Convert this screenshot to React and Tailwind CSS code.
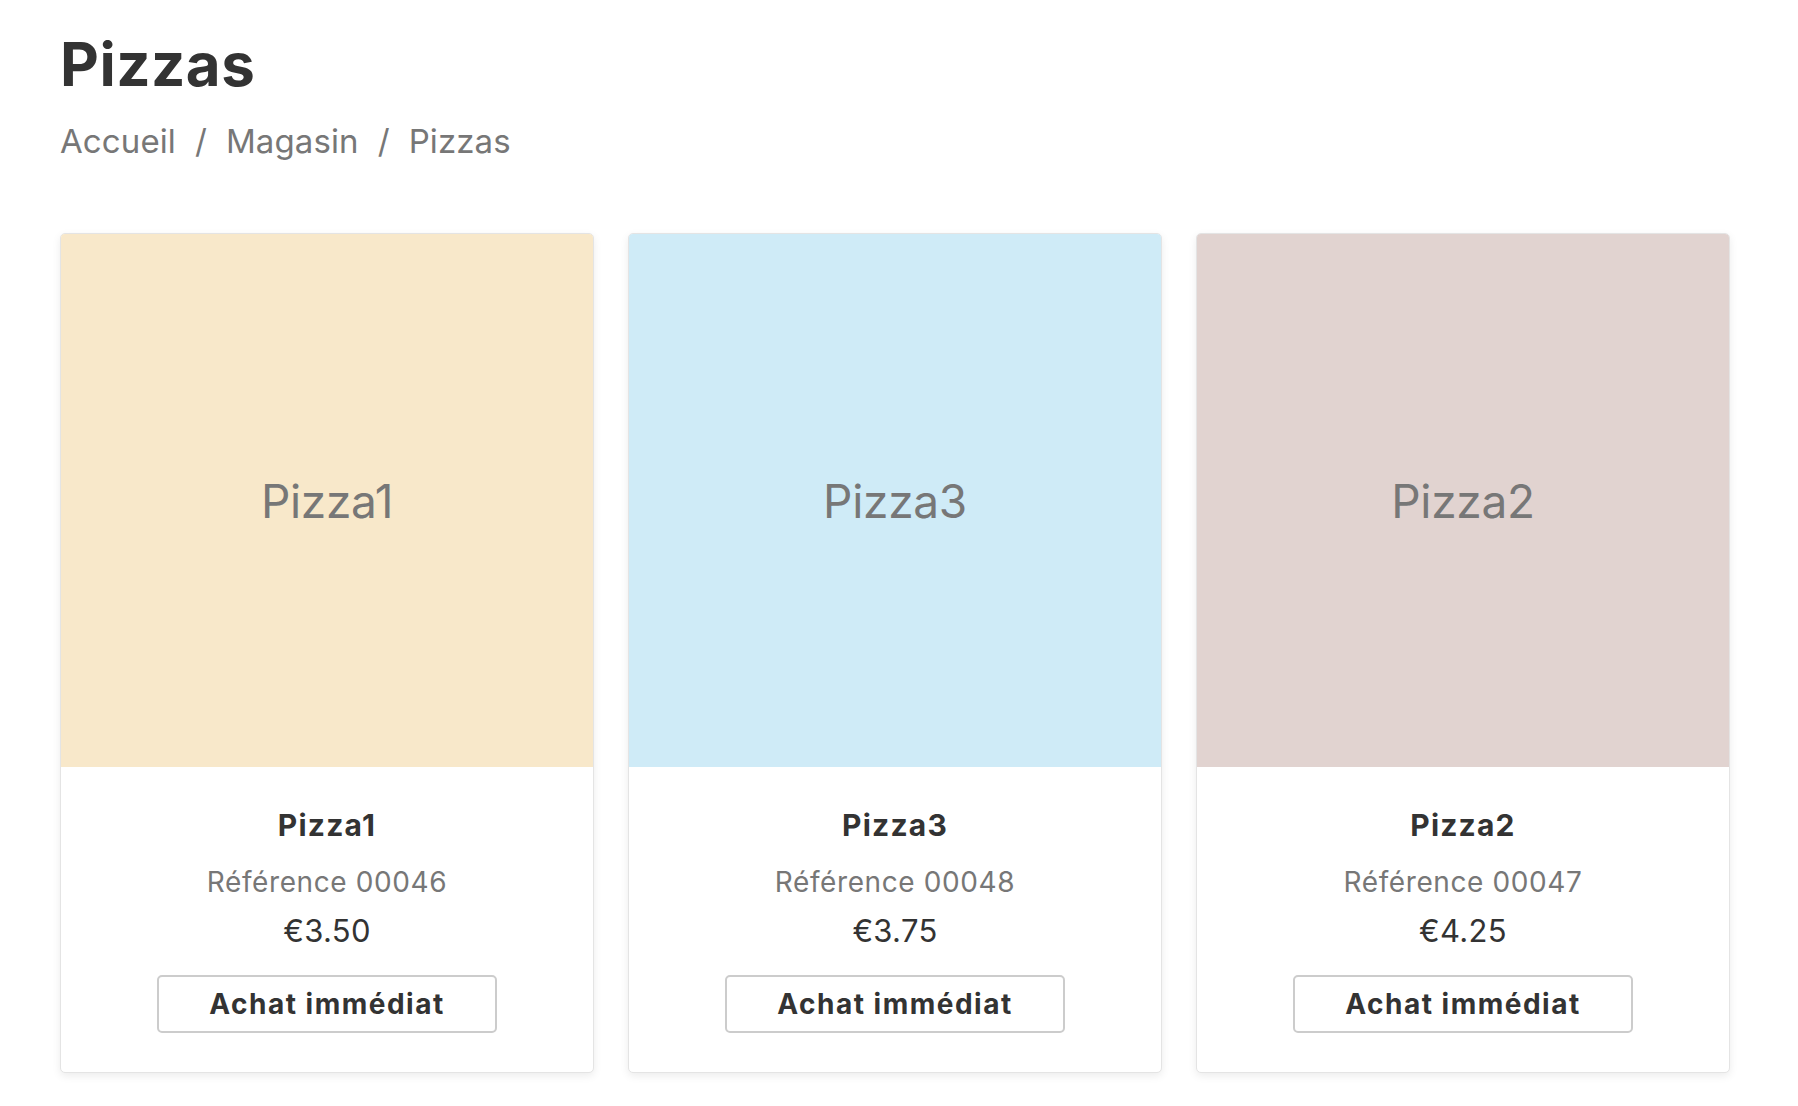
import React from 'react';

const PIZZAS = [
  { name: 'Pizza1', ref: '00046', price: '€3.50', bg: 'bg-[#f8e8ca]' },
  { name: 'Pizza3', ref: '00048', price: '€3.75', bg: 'bg-[#cfebf7]' },
  { name: 'Pizza2', ref: '00047', price: '€4.25', bg: 'bg-[#e1d3d0]' },
];

const PizzaCard = ({ pizza }) => (
  <div className="flex flex-col bg-white border border-[#e4e4e4] rounded-[5px] shadow-[0_3px_8px_rgba(0,0,0,0.08)] overflow-hidden">
    <div className={`${pizza.bg} h-[533px] flex items-center justify-center`}>
      <span className="text-[46px] leading-none text-[#777777] tracking-[-0.3px]">{pizza.name}</span>
    </div>
    <div className="flex flex-col items-center pt-[43px] pb-[39px]">
      <div className="text-[30px] leading-none font-bold text-[#333333] tracking-[1.2px]">{pizza.name}</div>
      <div className="mt-[28px] text-[28px] leading-none text-[#777777] tracking-[0.6px]">Référence {pizza.ref}</div>
      <div className="mt-[19px] text-[31px] leading-none text-[#333333] tracking-[0.3px]">{pizza.price}</div>
      <button
        type="button"
        className="mt-[29px] w-[340px] h-[58px] border-2 border-[#cccccc] rounded-[5px] bg-white text-[28px] font-bold text-[#333333] tracking-[1.5px]"
      >
        Achat immédiat
      </button>
    </div>
  </div>
);

export default function App() {
  return (
    <div className="min-h-screen bg-white px-[60px] pt-[34px] font-['Inter','Liberation_Sans',sans-serif]">
      <h1 className="text-[60px] leading-none font-bold text-[#333333] tracking-[0.5px]">Pizzas</h1>
      <nav className="mt-[31px] flex items-center gap-[19px] text-[33px] leading-none text-[#777777] tracking-[0.1px]">
        <span>Accueil</span>
        <span>/</span>
        <span>Magasin</span>
        <span>/</span>
        <span>Pizzas</span>
      </nav>
      <div className="mt-[75px] grid grid-cols-3 gap-[34px] w-[1670px]">
        {PIZZAS.map((p) => (
          <PizzaCard key={p.name} pizza={p} />
        ))}
      </div>
    </div>
  );
}
